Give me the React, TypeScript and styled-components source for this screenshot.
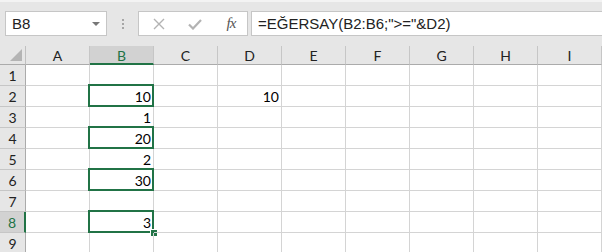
import React from "react"
import styled, { createGlobalStyle, css } from "styled-components"

const GREEN = "#217346"

const GlobalStyle = createGlobalStyle`
  html, body {
    margin: 0;
    padding: 0;
    background: #ffffff;
    overflow: hidden;
  }
`

const Page = styled.div`
  width: 602px;
  height: 252px;
  overflow: hidden;
  background: #ffffff;
`

const Toolbar = styled.div`
  height: 46px;
  box-sizing: border-box;
  background: #e6e6e6;
  border-top: 2px solid #f3f3f3;
  display: flex;
  align-items: flex-start;
  padding: 9px 0 0 5px;
`

const NameBox = styled.div`
  width: 102px;
  height: 25px;
  box-sizing: border-box;
  background: #fff;
  border: 1px solid #c6c6c6;
  display: flex;
  align-items: center;
  justify-content: space-between;
  padding: 0 6px 0 6px;
  font-family: "Liberation Sans", Arial, sans-serif;
  font-size: 15px;
  color: #222;
`

const DropArrow = styled.span`
  width: 0;
  height: 0;
  border-left: 4px solid transparent;
  border-right: 4px solid transparent;
  border-top: 4px solid #777;
`

const Grip = styled.div`
  width: 31px;
  height: 25px;
  display: flex;
  flex-direction: column;
  align-items: center;
  justify-content: center;
  gap: 2px;
`

const GripDot = styled.span`
  width: 2px;
  height: 2px;
  background: #a6a6a6;
`

const FormulaButtons = styled.div`
  width: 110px;
  height: 25px;
  box-sizing: border-box;
  background: #fff;
  border: 1px solid #c6c6c6;
  display: flex;
  align-items: center;
  padding-left: 10px;
  gap: 16px;
`

const IconSlot = styled.span`
  width: 20px;
  height: 20px;
  display: flex;
  align-items: center;
  justify-content: center;
`

const Fx = styled.span`
  font-family: "Liberation Serif", "Times New Roman", serif;
  font-style: italic;
  font-size: 15px;
  color: #555;
  letter-spacing: -1px;
`

const FormulaInput = styled.div`
  flex: 1;
  height: 25px;
  box-sizing: border-box;
  margin-left: 3px;
  background: #fff;
  border: 1px solid #c6c6c6;
  border-right: none;
  display: flex;
  align-items: center;
  padding-left: 6px;
  font-family: "Liberation Sans", Arial, sans-serif;
  font-size: 15px;
  color: #222;
  white-space: pre;
`

const Sheet = styled.div`
  display: grid;
  grid-template-columns: 26px repeat(9, 64px);
  grid-template-rows: 19px repeat(9, 21px);
`

const headerBase = css`
  box-sizing: border-box;
  background: #e6e6e6;
  display: flex;
  align-items: center;
  justify-content: center;
  font-family: Lato, "Open Sans", sans-serif;
  font-size: 14px;
  color: #222;
`

const Corner = styled.div`
  ${headerBase};
  border-right: 1px solid #c0c0c0;
  border-bottom: 1px solid #ababab;
  justify-content: flex-end;
  align-items: flex-end;
  padding: 0 3px 3px 0;
`

const ColHead = styled.div<{ $active?: boolean }>`
  ${headerBase};
  border-right: 1px solid #c6c6c6;
  border-bottom: 1px solid #ababab;
  padding-top: 1px;
  ${p =>
    p.$active &&
    css`
      background: #d2d2d2;
      border-bottom: 2px solid ${GREEN};
      color: ${GREEN};
    `}
`

const RowHead = styled.div<{ $active?: boolean }>`
  ${headerBase};
  border-right: 1px solid #ababab;
  border-bottom: 1px solid #c6c6c6;
  ${p =>
    p.$active &&
    css`
      background: #d2d2d2;
      border-right: 2px solid ${GREEN};
      color: ${GREEN};
    `}
`

const Cell = styled.div`
  position: relative;
  box-sizing: border-box;
  border-right: 1px solid #d4d4d4;
  border-bottom: 1px solid #d4d4d4;
  display: flex;
  align-items: center;
  justify-content: flex-end;
  padding: 1px 2px 0 0;
  font-family: Lato, "Open Sans", sans-serif;
  font-size: 14px;
  color: #000;
`

const Outline = styled.div`
  position: absolute;
  top: -2px;
  left: -2px;
  right: -1px;
  bottom: -1px;
  border: 2px solid ${GREEN};
  pointer-events: none;
`

const FillHandle = styled.div`
  position: absolute;
  right: -4px;
  bottom: -4px;
  width: 6px;
  height: 6px;
  background: ${GREEN};
  border-left: 1px solid #fff;
  border-top: 1px solid #fff;
`

const columns = ["A", "B", "C", "D", "E", "F", "G", "H", "I"]

const values: Record<string, string> = {
  B2: "10",
  B3: "1",
  B4: "20",
  B5: "2",
  B6: "30",
  B8: "3",
  D2: "10",
}

const outlined = ["B2", "B4", "B6", "B8"]

const App: React.FC = () => {
  return (
    <Page>
      <GlobalStyle />
      <Toolbar>
        <NameBox>
          <span>B8</span>
          <DropArrow />
        </NameBox>
        <Grip>
          <GripDot />
          <GripDot />
          <GripDot />
        </Grip>
        <FormulaButtons>
          <IconSlot>
            <svg width="12" height="12" viewBox="0 0 12 12">
              <path d="M1 1L11 11M11 1L1 11" stroke="#b3b3b3" strokeWidth="1.4" />
            </svg>
          </IconSlot>
          <IconSlot>
            <svg width="14" height="12" viewBox="0 0 14 12">
              <path d="M1 6.5L5 10.5L13 2" stroke="#b3b3b3" strokeWidth="2.2" fill="none" />
            </svg>
          </IconSlot>
          <IconSlot>
            <Fx>fx</Fx>
          </IconSlot>
        </FormulaButtons>
        <FormulaInput>{'=EĞERSAY(B2:B6;">="&D2)'}</FormulaInput>
      </Toolbar>
      <Sheet>
        <Corner>
          <svg width="12" height="12" viewBox="0 0 12 12">
            <path d="M12 0L12 12L0 12Z" fill="#b4b4b4" />
          </svg>
        </Corner>
        {columns.map(c => (
          <ColHead key={c} $active={c === "B"}>
            {c}
          </ColHead>
        ))}
        {Array.from({ length: 9 }, (_, i) => i + 1).map(r => (
          <React.Fragment key={r}>
            <RowHead $active={r === 8}>{r}</RowHead>
            {columns.map(c => {
              const ref = `${c}${r}`
              return (
                <Cell key={ref}>
                  {values[ref]}
                  {outlined.includes(ref) && <Outline />}
                  {ref === "B8" && <FillHandle />}
                </Cell>
              )
            })}
          </React.Fragment>
        ))}
      </Sheet>
    </Page>
  )
}

export default App
